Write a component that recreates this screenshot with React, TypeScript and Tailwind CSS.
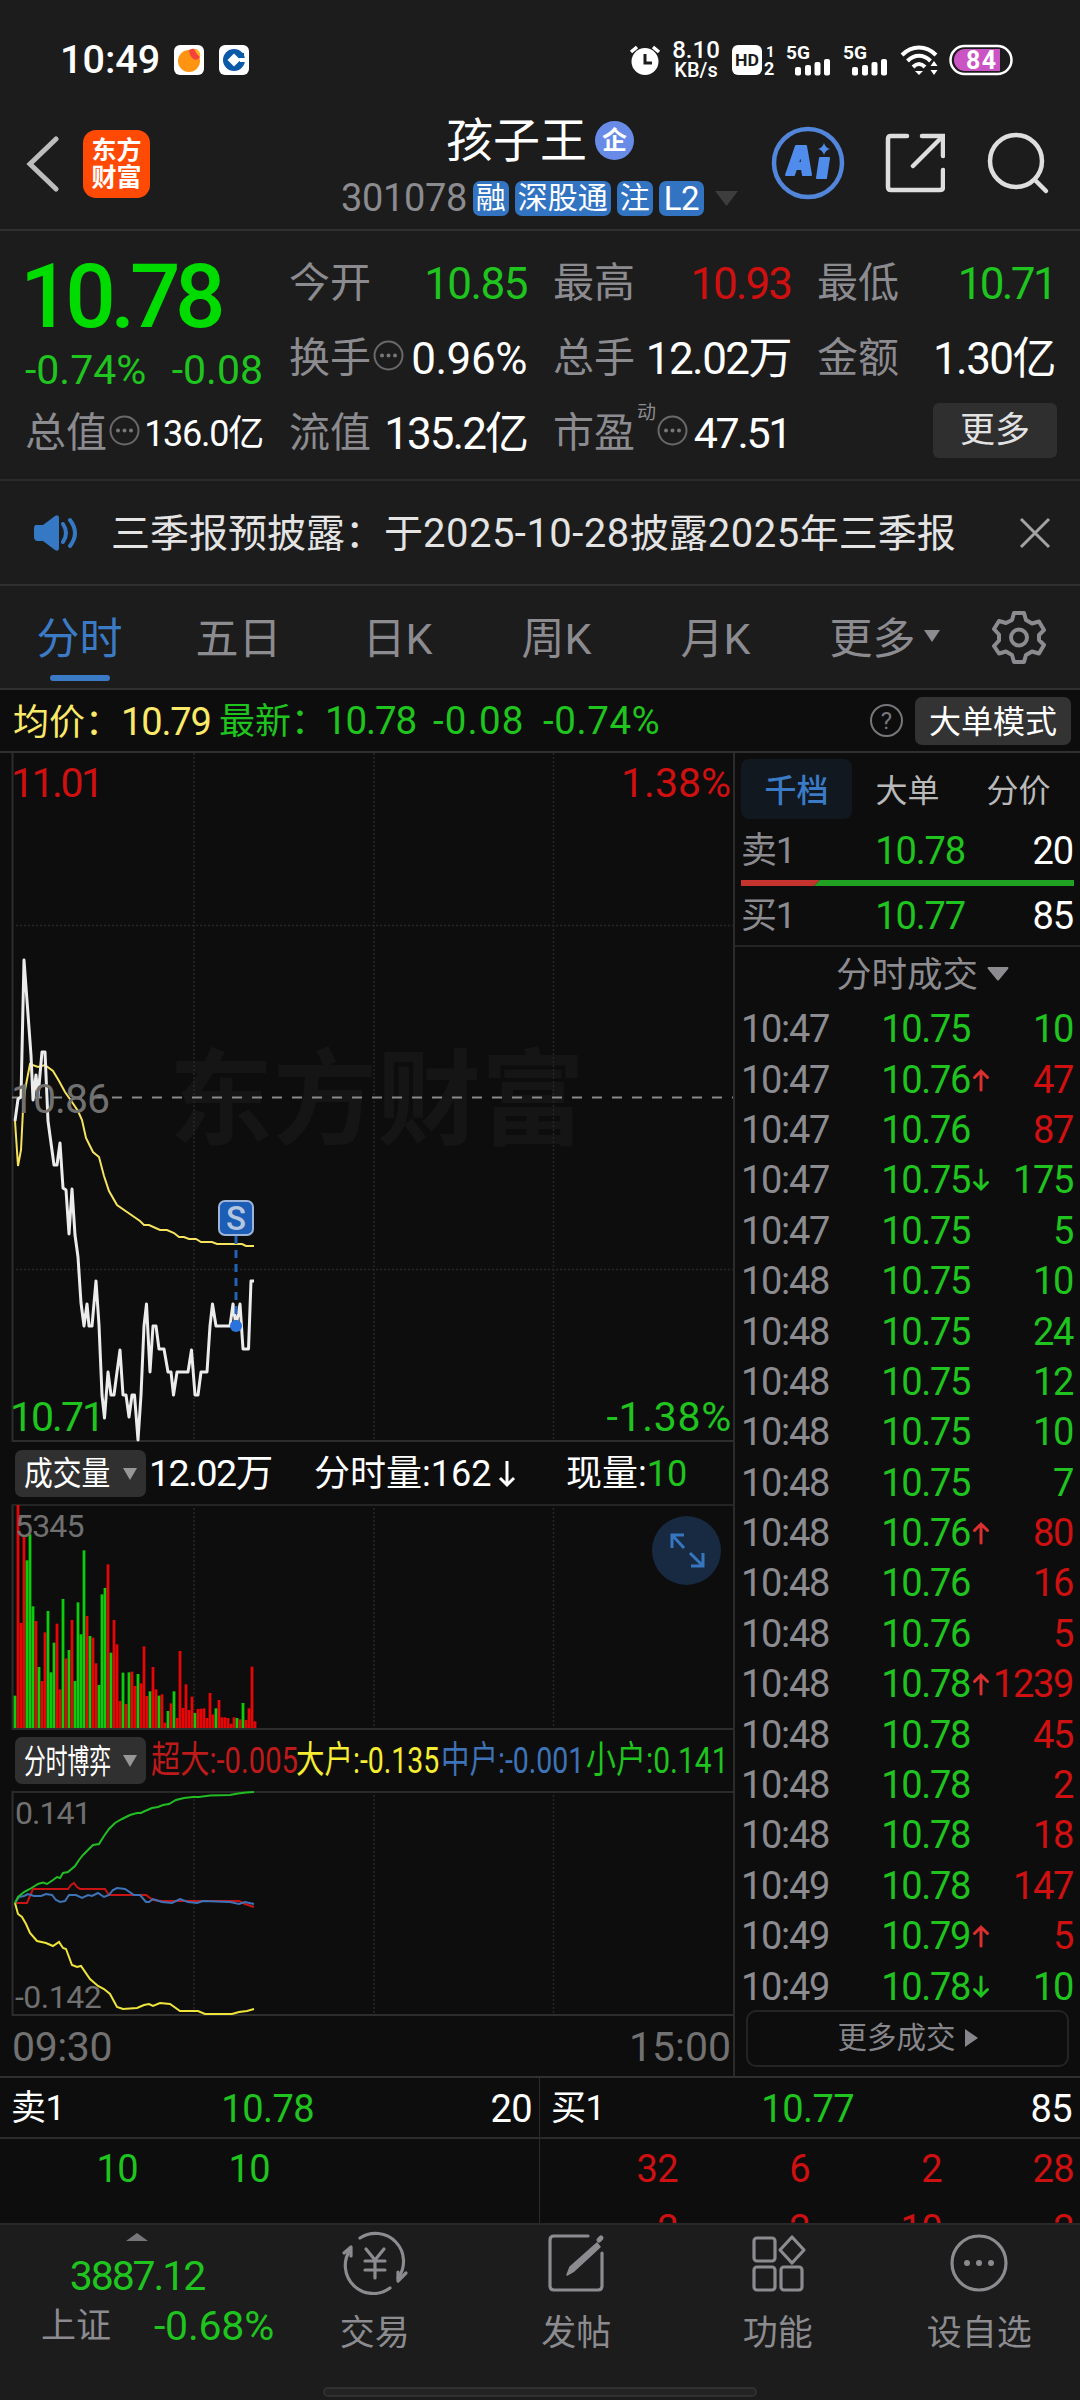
import type { ReactNode } from "react";
import clsx from "clsx";

const UP = "text-[#cf1010]";
const DOWN = "text-[#1fc41f]";
const GREY = "text-[#8b8b90]";

type Trade = [time: string, price: string, volume: number, side: "buy" | "sell", arrow?: "up" | "down"];

const trades: Trade[] = [
  ["10:47", "10.75", 10, "sell"],
  ["10:47", "10.76", 47, "buy", "up"],
  ["10:47", "10.76", 87, "buy"],
  ["10:47", "10.75", 175, "sell", "down"],
  ["10:47", "10.75", 5, "sell"],
  ["10:48", "10.75", 10, "sell"],
  ["10:48", "10.75", 24, "sell"],
  ["10:48", "10.75", 12, "sell"],
  ["10:48", "10.75", 10, "sell"],
  ["10:48", "10.75", 7, "sell"],
  ["10:48", "10.76", 80, "buy", "up"],
  ["10:48", "10.76", 16, "buy"],
  ["10:48", "10.76", 5, "buy"],
  ["10:48", "10.78", 1239, "buy", "up"],
  ["10:48", "10.78", 45, "buy"],
  ["10:48", "10.78", 2, "buy"],
  ["10:48", "10.78", 18, "buy"],
  ["10:49", "10.78", 147, "buy"],
  ["10:49", "10.79", 5, "buy", "up"],
  ["10:49", "10.78", 10, "sell", "down"],
];

// One bar per minute, negative when the price fell
const volumes = [
  -97, 669, 315, 574, -503, -581, -365, 321, -183, 141, 287, -351, -167, -256, 313, 116, -387, 209, -234, 324,
  -141, -377, -281, -533, 336, -276, 271, 194, -129, -401, -420, 491, -226, 324, 251, 81, -166, 72, -167, 169,
  126, -162, 134, 245, 96, -110, 183, 116, -97, 101, 16, -51, 74, -110, 30, 231, 60, 131, 54, 94,
  -45, 57, 58, 59, 30, 105, 41, -59, 84, 32, 32, 30, 13, 32, -30, 26, -75, 24, 59, 184, 20,
];

const priceLine =
  "15,1121 18,1099 21,1097 24,960 31,1055 33,1100 36,1075 38,1097 42,1052 45,1052 48,1121 51,1143 54,1165 57,1165 60,1143 63,1188 66,1190 69,1234 72,1189 75,1235 78,1257 81,1303 84,1326 87,1304 89,1326 92,1326 96,1281 99,1325 102,1395 104.5,1418 108,1372 111,1395 114,1395 117,1372 120,1350 123,1395 126,1395 129,1417 132,1395 134.5,1395 138,1440 141,1395 144,1326 146.5,1304 150,1372 153,1326 156,1326 159,1349 164,1349 168,1372 171,1372 173.5,1395 177,1372 188,1372 191.5,1350 195,1395 198,1395 201,1372 207,1372 210,1326 212.5,1304 216,1326 230,1326 233,1304 236,1326 240,1304 243,1349 248.5,1349 251,1281 254,1281";
const averageLine =
  "15,1121 18,1166 21,1150 23,1110 25,1090 30,1064 38,1067 45,1065 53,1071 59,1081 65,1092 72,1102 78,1111 82,1120 86,1138 93,1152 99,1157 104,1176 109,1191 117,1205 127,1212 140,1221 144,1225 149,1225 160,1230 167,1230 174,1233 179,1237 184,1237 189,1239 196,1239 201,1242 212,1242 217,1244 242,1244 246,1246 254,1246";
const smallLine =
  "15,1903 18,1897 24,1892 30,1889 38,1884 43,1882.5 47,1884 53,1880 57,1877 60,1878 63,1873 68,1872 75,1866 79,1860 83,1855 88,1850 93,1845 99,1844 104,1836 109,1829 115,1823 122,1819 130,1815 137,1813 141,1813 145,1811 152,1808 158,1807 163,1805 169,1804 176,1800 184,1798 193,1797 199,1797 210,1795.5 230,1795 238,1793.5 246,1792.5 254,1792";
const superLine =
  "15,1903 27,1903 33,1889 68,1889 71,1885 74,1883 77,1887 80,1889 105,1889 109,1895 146,1895 153,1900 160,1901 239,1901 245,1904 254,1907";
const middleLine =
  "15,1903 19,1897 24,1896 28,1894 34,1896 41,1896 46,1894 52,1895 56,1900 60,1902 65,1901 69,1895 76,1895 82,1898 88,1895 92,1896 98,1893 104,1897 109,1895 113,1890 117,1888 125,1889 134,1895 140,1895 146,1902 149,1902 153,1899 162,1902 172,1903 180,1899 188,1902 197,1903 203,1901 230,1902 239,1904 245,1902 254,1904";
const largeLine =
  "15,1903 18,1914 22,1917 26,1924 30,1933 37,1941 46,1943 53,1946 59,1942 63,1948 66,1949 72,1965 77,1967 81,1966 90,1979 98,1986 104,1989 110,1994 117,2007 123,2009 137,2008 144,2005 149,2004 153,2006 160,2003 170,2004 180,2011 198,2011 205,2014 232,2014 239,2012 247,2011 254,2009";

const SignalIcon = () => (
  <svg className="overflow-visible" width="46" height="32" viewBox="0 0 46 32" fill="#fff">
    <text x="0" y="15" fontSize="19" fontWeight="700" textLength="24" lengthAdjust="spacingAndGlyphs">
      5G
    </text>
    <rect x="9" y="23" width="6" height="8.500" rx="2" />
    <rect x="19" y="21" width="6" height="10.500" rx="2" />
    <rect x="28.500" y="18" width="6" height="13.500" rx="2" />
    <rect x="38" y="15" width="6" height="16.500" rx="2" />
  </svg>
);

const StatusBar = () => (
  <div className="flex h-[120px] items-center pl-[60px] pr-[67px] text-white">
    <span className="w-[114px] text-[39.500px] font-medium leading-none">10:49</span>
    <svg width="30" height="30" viewBox="0 0 30 30">
      <rect width="30" height="30" rx="6" fill="#fff" />
      <circle cx="15" cy="16" r="11" fill="#ff9412" />
      <path d="M15 5c6-3 11 0 11 7-3 5-10 3-11-7z" fill="#f4433c" />
      <path d="M20 4c4 0 7 3 6 8-3-2-4-5-6-8z" fill="#ffb31a" />
    </svg>
    <svg className="ml-[15px]" width="30" height="30" viewBox="0 0 30 30">
      <rect width="30" height="30" rx="6" fill="#fff" />
      <circle cx="15" cy="15" r="11" fill="#0a5aa8" />
      <path d="M15 8.500l6.500 6.500-6.500 6.500L8.500 15z" fill="#fff" />
      <path d="M20 13h8v4h-7z" fill="#fff" />
      <path d="M18 8h7v5h-5z" fill="#0a5aa8" />
    </svg>
    <div className="ml-auto flex items-center">
      <svg width="32" height="32" viewBox="0 0 32 32" fill="#fff">
        <circle cx="16" cy="17.500" r="13.500" />
        <path d="M16 10v9h7" fill="none" stroke="#1c1c1c" strokeWidth="3" />
        <path d="M2 8l6-5M30 8l-6-5" stroke="#fff" strokeWidth="3.500" />
      </svg>
      <div className="ml-[11px] flex w-[48px] flex-col items-center whitespace-nowrap font-medium leading-none">
        <span className="text-[24px] leading-[19px]">8.10</span>
        <span className="text-[20px] leading-[20px]">KB/s</span>
      </div>
      <svg className="ml-[12px] overflow-visible" width="44" height="32" viewBox="0 0 44 32" fill="#fff">
        <rect y="1" width="30" height="30" rx="6" />
        <text x="3" y="22" fontSize="17" fontWeight="700" fill="#1c1c1c" textLength="24" lengthAdjust="spacingAndGlyphs">
          HD
        </text>
        <text x="34" y="13" fontSize="15" fontWeight="700">
          1
        </text>
        <text x="32" y="31" fontSize="18" fontWeight="700">
          2
        </text>
      </svg>
      <span className="ml-[10px] flex gap-[11px]">
        <SignalIcon />
        <SignalIcon />
      </span>
      <svg className="ml-[11px]" width="40" height="32" viewBox="0 0 40 32" fill="none" stroke="#fff" strokeWidth="4">
        <path d="M2 11c10-10 24-10 34 0" />
        <path d="M7.500 17c7-7 16-7 23 0" />
        <path d="M13 23c4-4 8-4 12 0" />
        <path d="M15 27l4 4 4-4z" fill="#fff" stroke="none" />
        <path d="M34 17l3.500 5h-7zM34 31l3.500-5h-7z" fill="#fff" stroke="none" />
      </svg>
      <svg className="ml-[9px]" width="64" height="32" viewBox="0 0 64 32">
        <rect x="1.500" y="2" width="61" height="28" rx="14" fill="#1c1c1c" stroke="#fff" strokeWidth="2.500" />
        <path d="M16 5h35v22H16a11 11 0 0 1 0-22z" fill="#cb54c4" />
        <text x="17" y="24.500" fontSize="25" fontWeight="700" fill="#fff" textLength="30">
          84
        </text>
      </svg>
    </div>
  </div>
);

const Tag = ({ children }: { children: ReactNode }) => (
  <span className="flex h-[35px] shrink-0 items-center whitespace-nowrap rounded-[7px] bg-[#3274c1] px-[3px] text-[30px] leading-none text-white">
    {children}
  </span>
);

const Header = () => (
  <div className="flex h-[111px] items-start border-b-2 border-[#303030]">
    <svg className="ml-[26px] mt-[16px]" width="34" height="56" viewBox="0 0 34 56" fill="none">
      <path d="M30 3L4 28l26 25" stroke="#bdbdbd" strokeWidth="5" strokeLinecap="round" />
    </svg>
    <div className="ml-[23px] mt-[10px] flex h-[68px] w-[67px] flex-col items-center justify-center rounded-[13px] bg-[#ff4a05] text-[25px] font-bold leading-[27px] text-white">
      <span>东方</span>
      <span>财富</span>
    </div>
    <div className="ml-[191px] w-[394px]">
      <div className="-mt-[5px] flex h-[50px] items-center pl-[105px]">
        <span className="text-[47px] leading-none text-white">孩子王</span>
        <span className="ml-[8px] flex size-[39px] items-center justify-center rounded-full bg-[#678be6] text-[25px] font-bold leading-none text-white">
          企
        </span>
      </div>
      <div className="mt-[14px] flex items-center gap-[6px]">
        <span className={clsx("w-[128px] text-[38px] leading-none tracking-[-0.01em]", GREY)}>301078</span>
        <Tag>融</Tag>
        <Tag>深股通</Tag>
        <Tag>注</Tag>
        <Tag>
          <span className="px-[2px] text-[33px] tracking-[-0.02em]">L2</span>
        </Tag>
        <svg className="ml-[5px] shrink-0" width="23" height="15" viewBox="0 0 23 15" fill="#3d3d3d">
          <path d="M0 0h23L11.500 15z" />
        </svg>
      </div>
    </div>
    <svg className="ml-[36px] mt-[6px]" width="74" height="74" viewBox="0 0 74 74">
      <circle cx="37" cy="37" r="34" fill="none" stroke="#5186da" strokeWidth="4.500" />
      <path
        d="M15 49l10-29h10l5 29h-8l-1-6h-6l-2 6zM27 37h4l-1-9z M49 32h9l-3 20h-9z"
        fill="#508ceb"
        stroke="#508ceb"
        strokeWidth="2"
        strokeLinejoin="round"
        fillRule="evenodd"
      />
      <path d="M53 17q1.500 5 6 6-4.500 1-6 6-1.500-5-6-6 4.500-1 6-6z" fill="#508ceb" />
    </svg>
    <svg className="ml-[40px] mt-[13px]" width="60" height="60" viewBox="0 0 60 60" fill="none" stroke="#dedede" strokeWidth="4.500" strokeLinecap="round">
      <path d="M22 3H6q-3 0-3 3v48q0 3 3 3h49q3 0 3-3V37" />
      <path d="M37 3h21v20" />
      <path d="M57 4L28 33" />
    </svg>
    <svg className="ml-[42px] mt-[12px]" width="64" height="64" viewBox="0 0 64 64" fill="none" stroke="#dedede" strokeWidth="4.500" strokeLinecap="round">
      <circle cx="29" cy="29" r="26" />
      <path d="M48 48l11 11" />
    </svg>
  </div>
);

const Dots = () => (
  <svg className="mb-[6px] ml-[2px] shrink-0" width="31" height="31" viewBox="0 0 31 31" fill="#77777b">
    <circle cx="15.500" cy="15.500" r="14" fill="none" stroke="#69696c" strokeWidth="2" />
    <circle cx="9" cy="15.500" r="2" />
    <circle cx="15.500" cy="15.500" r="2" />
    <circle cx="22" cy="15.500" r="2" />
  </svg>
);

interface StatProps {
  label: string;
  value: string;
  color?: string;
  fit?: string;
  dots?: boolean;
  sup?: string;
}

const Stat = ({ label, value, color = "text-white", fit = "text-[44px] tracking-[-0.035em]", dots, sup }: StatProps) => (
  <div className="flex h-[75px] w-[238px] items-center whitespace-nowrap pt-[2px] leading-none">
    <span className={clsx("text-[41px]", GREY)}>{label}</span>
    {sup && <span className={clsx("-mr-px ml-[2px] self-start pt-[6px] text-[19px]", GREY)}>{sup}</span>}
    {dots && <Dots />}
    <span className={clsx("ml-auto", color, fit)}>{value}</span>
  </div>
);

const Quote = () => (
  <div className="flex h-[250px] justify-between border-b-2 border-[#2b2b2b] px-[25px] pt-[14px]">
    <div>
      <div className="-ml-[5px] flex h-[100px] items-center pt-[2px] text-[89px] font-medium leading-none tracking-[-0.06em] text-[#00dc00]">
        10.78
      </div>
      <div className={clsx("flex h-[50px] w-[238px] items-center justify-between whitespace-nowrap text-[41px] leading-none", DOWN)}>
        <span>-0.74%</span>
        <span>-0.08</span>
      </div>
      <Stat label="总值" value="136.0亿" fit="text-[36px] tracking-[-0.035em]" dots />
    </div>
    <div>
      <Stat label="今开" value="10.85" color={DOWN} />
      <Stat label="换手" value="0.96%" fit="text-[44px] tracking-[-0.01em]" dots />
      <Stat label="流值" value="135.2亿" fit="text-[44px] tracking-[-0.045em]" />
    </div>
    <div>
      <Stat label="最高" value="10.93" color={UP} fit="text-[44px] tracking-[-0.045em]" />
      <Stat label="总手" value="12.02万" />
      <Stat label="市盈" sup="动" value="47.51" fit="text-[43px] tracking-[-0.055em] pr-[1px]" dots />
    </div>
    <div className="flex flex-col items-end">
      <Stat label="最低" value="10.71" color={DOWN} fit="text-[44px] tracking-[-0.06em]" />
      <Stat label="金额" value="1.30亿" />
      <button type="button" className="-mr-[2px] mt-[8px] h-[55px] w-[124px] rounded-[6px] bg-[#2f2f2f] text-[35px] leading-none text-[#e2e2e2]">
        更多
      </button>
    </div>
  </div>
);

const Notice = () => (
  <div className="flex h-[105px] items-center border-b-2 border-[#303030] pl-[32px] pr-[29px]">
    <svg width="48" height="38" viewBox="0 0 48 38" fill="#3578c4">
      <path d="M4 11h7L23 2q4-2 4 2v30q0 4-4 2l-12-9H5q-3-1-3-4v-8q0-4 2-4z" />
      <path d="M31 10q6 9 0 18M38 6q10 13 0 26" fill="none" stroke="#3578c4" strokeWidth="4" strokeLinecap="round" />
    </svg>
    <span className="ml-[31px] whitespace-nowrap pt-[2px] text-[39px] leading-none text-[#e4e4e4]">
      三季报预披露：于<span className="text-[40px] tracking-[0.012em]">2025-10-28</span>披露
      <span className="text-[40px] tracking-[0.012em]">2025</span>年三季报
    </span>
    <svg className="ml-auto" width="32" height="32" viewBox="0 0 32 32" stroke="#a3a3a3" strokeWidth="3">
      <path d="M2 2l28 28M30 2L2 30" />
    </svg>
  </div>
);

const tabs = ["分时", "五日", "日K", "周K", "月K", "更多"];

const PeriodTabs = () => (
  <div className="flex h-[104px] items-center border-b-2 border-[#303030]">
    {tabs.map((tab, i) => (
      <div
        key={tab}
        className={clsx(
          "relative flex h-full w-[159px] items-center justify-center pt-[4px] text-[43px] leading-none",
          i === 0 ? "text-[#3b7bc6]" : GREY,
          i === 5 && "pl-[20px]"
        )}
      >
        {tab}
        {i === 0 && <span className="absolute bottom-[7px] h-[6px] w-[60px] rounded-full bg-[#3b7bc6]" />}
        {i === 5 && (
          <svg className="mb-[6px] ml-[8px]" width="16" height="12" viewBox="0 0 16 12" fill="#8b8b90">
            <path d="M0 0h16L8 12z" />
          </svg>
        )}
      </div>
    ))}
    <svg className="ml-[38px]" width="54" height="54" viewBox="0 0 54 54" fill="none" stroke="#8b8b90" strokeWidth="4" strokeLinejoin="round">
      <path d="M22 3h10l2 7 6 3.500 7-2 5 8.500-5 5v5l5 5-5 8.500-7-2-6 3.500-2 7H22l-2-7-6-3.500-7 2L2 36l5-5.500v-6L2 19l5-8 7 2 6-3z" />
      <circle cx="27" cy="27.500" r="8" />
    </svg>
  </div>
);

const AverageRow = () => (
  <div className="flex h-[63px] items-center whitespace-nowrap border-b-2 border-[#303030] bg-[#0d0d0d] pl-[13px] pr-[9px] leading-none">
    <span className="w-[206px] pt-[2px] text-[36px] text-[#fbe96a]">
      均价：<span className="text-[38px] tracking-[-0.03em]">10.79</span>
    </span>
    <span className={clsx("pt-[2px] text-[36px]", DOWN)}>最新：</span>
    <span className={clsx("-ml-[2px] flex pt-[2px] text-[38.500px]", DOWN)}>
      <span className="w-[108px] tracking-[-0.03em]">10.78</span>
      <span className="w-[110px] tracking-[0.03em]">-0.08</span>
      <span className="tracking-[0.015em]">-0.74%</span>
    </span>
    <span className="ml-auto flex size-[33px] items-center justify-center rounded-full border-2 border-[#77777b] text-[24px] text-[#77777b]">
      ?
    </span>
    <span className="ml-[12px] flex h-[48px] w-[156px] items-center justify-center rounded-[7px] bg-[#333333] pt-[2px] text-[32px] text-white">
      大单模式
    </span>
  </div>
);

const GridLines = ({ top, bottom }: { top: number; bottom: number }) => (
  <>
    {[194, 374, 553.5].map((x) => (
      <path key={x} d={`M${x} ${top}V${bottom}`} stroke="#272727" strokeWidth="1.5" strokeDasharray="2 2" />
    ))}
    <path d={`M12.500 ${top}V${bottom - 1}H733`} fill="none" stroke="#2d2d2d" strokeWidth="2" />
  </>
);

const PriceChart = () => (
  <svg className="block" width="733" height="689" viewBox="0 753 733 689">
    <text x="169" y="1137" fontSize="104" fontWeight="700" fill="#151515">
      东方财富
    </text>
    <GridLines top={753} bottom={1442} />
    <path d="M12 925.500H733M12 1269.500H733" stroke="#272727" strokeWidth="1.5" strokeDasharray="2 2" />
    <path d="M12 1097.500H733" stroke="#8a8a8a" strokeWidth="2" strokeDasharray="10 10" />
    <polyline points={averageLine} fill="none" stroke="#f5e35f" strokeWidth="2" />
    <polyline points={priceLine} fill="none" stroke="#ececec" strokeWidth="3" strokeLinejoin="round" />
    <path d="M236 1236V1326" stroke="#2462b4" strokeWidth="3" strokeDasharray="8 6" />
    <circle cx="236" cy="1326" r="6" fill="#2a73dc" />
    <rect x="219" y="1201" width="34" height="34" rx="6" fill="#1c5db5" stroke="#9db4d8" strokeWidth="2" />
    <text x="236" y="1230" fontSize="33" fontWeight="500" fill="#b6c6df" textAnchor="middle">
      S
    </text>
    <g fontSize="41" letterSpacing="-1">
      <text x="11" y="797" fill="#cf1010" letterSpacing="-2.5">11.01</text>
      <text x="731" y="797" fill="#cf1010" textAnchor="end" letterSpacing="0">1.38%</text>
      <text x="11" y="1113" fill="#717171">10.86</text>
      <text x="10" y="1431" fill="#1fc41f" letterSpacing="-2">10.71</text>
      <text x="732" y="1431" fill="#1fc41f" textAnchor="end" letterSpacing="0.7">-1.38%</text>
    </g>
  </svg>
);

const VolumeChart = () => (
  <svg className="block" width="733" height="226" viewBox="0 1504 733 226">
    <GridLines top={1504} bottom={1730} />
    <path d="M12 1505H733" stroke="#242424" strokeWidth="2" />
    {volumes.map((v, i) => (
      <rect
        key={i}
        x={13.6 + i * 3}
        y={1728 - Math.abs(v) / 3}
        width="2.800"
        height={Math.abs(v) / 3}
        fill={v > 0 ? "#e80505" : "#0ccc0c"}
      />
    ))}
    <text x="15" y="1537" fontSize="32" fill="#707070" letterSpacing="-0.8">
      5345
    </text>
    <circle cx="686.500" cy="1550.500" r="34.500" fill="#182a41" />
    <path d="M684 1535h-12v13M673 1536l11 12M691 1566h12v-13M702 1565l-12-12" fill="none" stroke="#3676bf" strokeWidth="3" />
  </svg>
);

const FlowChart = () => (
  <svg className="block" width="733" height="225" viewBox="0 1791 733 225">
    <GridLines top={1791} bottom={2016} />
    <path d="M12 1792H733" stroke="#2a2a2a" strokeWidth="2" />
    <g fontSize="32" fill="#707070" letterSpacing="-1">
      <text x="15" y="1824">0.141</text>
      <text x="15" y="2008" letterSpacing="-0.5">-0.142</text>
    </g>
    <g fill="none" strokeWidth="2">
      <polyline points={superLine} stroke="#c81414" />
      <polyline points={middleLine} stroke="#3f73b8" />
      <polyline points={largeLine} stroke="#efe43c" />
      <polyline points={smallLine} stroke="#22bd22" />
    </g>
  </svg>
);

// Labels are squeezed sideways so that they fit the fixed-width selector
const IndicatorSelect = ({ label, squeeze }: { label: string; squeeze: string }) => (
  <div className="relative flex h-[47px] w-[131px] items-center rounded-[7px] bg-[#303030] pl-[9px] pt-[2px] text-[33.500px] text-white">
    <span className={clsx("origin-left", squeeze)}>{label}</span>
    <svg className="absolute right-[9px] top-[18px]" width="14" height="12" viewBox="0 0 14 12" fill="#97979a">
      <path d="M0 0h14L7 12z" />
    </svg>
  </div>
);

const flows = [
  { text: "超大:-0.005", box: "w-[145px] text-[#bd1a1a]", squeeze: "scale-x-[0.79]" },
  { text: "大户:-0.135", box: "w-[145px] text-[#f5ec33]", squeeze: "scale-x-[0.77]" },
  { text: "中户:-0.001", box: "w-[145px] text-[#3f73b8]", squeeze: "scale-x-[0.77]" },
  { text: "小户:0.141", box: "w-[140px] text-[#1fc41f]", squeeze: "scale-x-[0.81]" },
];

const Charts = () => (
  <div className="w-[735px] whitespace-nowrap border-r-2 border-[#2b2b2b] leading-none">
    <PriceChart />
    <div className="flex h-[62px] items-center pl-[15px] text-[36px] text-white">
      <IndicatorSelect label="成交量" squeeze="scale-x-[0.86]" />
      <span className="ml-[3px] w-[165px] pt-[2px] text-[37.500px] tracking-[-0.04em]">12.02万</span>
      <span className="flex w-[252px] items-center pt-[2px]">
        分时量:162
        <svg className="ml-[7px]" width="18" height="28" viewBox="0 0 18 28" fill="none" stroke="#fff" strokeWidth="3">
          <path d="M9 1v24M2 18l7 7 7-7" />
        </svg>
      </span>
      <span className="pt-[2px]">现量:</span>
      <span className={clsx("pt-[2px]", DOWN)}>10</span>
    </div>
    <VolumeChart />
    <div className="flex h-[61px] items-center pl-[15px]">
      <IndicatorSelect label="分时博弈" squeeze="scale-x-[0.65]" />
      <div className="ml-[5px] flex text-[37px]">
        {flows.map((flow) => (
          <span key={flow.text} className={flow.box}>
            <span className={clsx("inline-block origin-left", flow.squeeze)}>{flow.text}</span>
          </span>
        ))}
      </div>
    </div>
    <FlowChart />
    <div className="flex h-[60px] items-center justify-between pl-[12px] pr-[2px] pt-[2px] text-[41px] text-[#717171]">
      <span className="tracking-[-0.01em]">09:30</span>
      <span>15:00</span>
    </div>
  </div>
);

const Arrow = ({ dir }: { dir: "up" | "down" }) => (
  <svg className="ml-[2px]" width="18" height="24" viewBox="0 0 18 24" fill="none" stroke={dir === "up" ? "#dc2f2f" : "#1fc41f"} strokeWidth="3" strokeLinecap="round">
    <path d={dir === "up" ? "M9 22V3M2.500 9.500L9 3l6.500 6.500" : "M9 2v19M2.500 14.500L9 21l6.500-6.500"} />
  </svg>
);

const Level = ({ side, price, volume }: { side: string; price: string; volume: number }) => (
  <div className="flex h-[59px] items-center pl-[6px] pr-[7px] text-[38px] tracking-[-0.03em]">
    <span className={clsx("w-[108px] text-[36px]", GREY)}>{side}</span>
    <span className={clsx("w-[116px] text-right", DOWN)}>{price}</span>
    <span className="ml-auto text-white">{volume}</span>
  </div>
);

const TradePanel = () => (
  <div className="flex-1 leading-none">
    <div className="flex pl-[6px] pt-[6px] text-[32px] text-[#b9b9b9]">
      <span className="flex h-[60px] w-[111px] items-center justify-center rounded-[8px] bg-[#111820] pt-[3px] font-medium text-[#3b7bc6]">千档</span>
      <span className="flex h-[60px] w-[111px] items-center justify-center pt-[3px]">大单</span>
      <span className="flex h-[60px] w-[111px] items-center justify-center pt-[3px]">分价</span>
    </div>
    <div className="pt-[2px]">
      <Level side="卖1" price="10.78" volume={20} />
    </div>
    <svg className="ml-[6px] block" width="333" height="6" viewBox="0 0 333 6">
      <path d="M0 0h79l-6 6H0z" fill="#c5332f" />
      <path d="M79 0h254v6H73z" fill="#21a121" />
    </svg>
    <Level side="买1" price="10.77" volume={85} />
    <div className={clsx("flex h-[59px] items-center border-t-2 border-[#242424] pl-[101px] text-[35.500px]", GREY)}>
      分时成交
      <svg className="mb-[3px] ml-[9px]" width="22" height="14" viewBox="0 0 22 14" fill="#8b8b90">
        <path d="M1 0h20q1 1 0 2L12 13q-1 1-2 0L1 2q-1-1 0-2z" />
      </svg>
    </div>
    {trades.map(([time, price, volume, side, arrow], i) => (
      <div key={i} className="flex h-[50.400px] items-center pl-[6px] pr-[7px] text-[38px] tracking-[-0.035em]">
        <span className={clsx("w-[110px]", GREY)}>{time}</span>
        <span className={clsx("w-[119px] text-right", DOWN)}>{price}</span>
        {arrow && <Arrow dir={arrow} />}
        <span className={clsx("ml-auto", side === "buy" ? UP : DOWN)}>{volume}</span>
      </div>
    ))}
    <div className="-mt-[2px] ml-[11px] flex h-[57px] w-[323px] items-center justify-center rounded-[10px] border-2 border-[#242424] text-[29.500px] text-[#85858a]">
      更多成交
      <svg className="ml-[9px]" width="13" height="18" viewBox="0 0 13 18" fill="#85858a">
        <path d="M0 0l13 9-13 9z" />
      </svg>
    </div>
  </div>
);

interface BookSideProps {
  side: string;
  price: string;
  volume: number;
  color: string;
  orders: string[];
}

const BookSide = ({ side, price, volume, color, orders }: BookSideProps) => (
  <div className="w-[540px] leading-none tracking-[-0.035em]">
    <div className="flex h-[61px] items-center border-b-2 border-[#2b2b2b] pl-[11px] pr-[8px] pt-[2px] text-[38px] text-white">
      <span className="w-[150px] text-[35px]">{side}</span>
      <span className={clsx("w-[153px] text-right", DOWN)}>{price}</span>
      <span className="ml-auto">{volume}</span>
    </div>
    <div className={clsx("grid h-[180px] auto-rows-[60px] grid-cols-4 pl-[6px] pr-[6px] text-right text-[38px]", color)}>
      {orders.map((order, i) => (
        <span key={i} className="leading-[60px]">
          {order}
        </span>
      ))}
    </div>
  </div>
);

const OrderBook = () => (
  <div className="flex h-[147px] overflow-hidden border-t-2 border-[#303030]">
    <BookSide side="卖1" price="10.78" volume={20} color={DOWN} orders={["10", "10"]} />
    <div className="-ml-px w-px shrink-0 bg-[#2b2b2b]" />
    <BookSide side="买1" price="10.77" volume={85} color={UP} orders={["32", "6", "2", "28", "2", "2", "10", "2"]} />
  </div>
);

const NavItem = ({ label, children }: { label: string; children: ReactNode }) => (
  <div className="flex flex-1 flex-col items-center">
    <svg className="mt-[6px]" width="68" height="64" viewBox="0 0 68 64" fill="none" stroke="#8b8b90" strokeWidth="3.200" strokeLinecap="round" strokeLinejoin="round">
      {children}
    </svg>
    <span className="mt-[21px]">{label}</span>
  </div>
);

const BottomNav = () => (
  <div className={clsx("relative flex h-[176px] border-t-2 border-[#282828] bg-[#1c1c1c] text-[35px] leading-none", GREY)}>
    <div className="flex w-[274px] flex-col items-center whitespace-nowrap">
      <svg className="mt-[8px]" width="22" height="8" viewBox="0 0 22 8" fill="#77777b">
        <path d="M11 0l11 8H0z" />
      </svg>
      <span className={clsx("mt-[15px] text-[41px] tracking-[-0.05em]", DOWN)}>3887.12</span>
      <span className="mt-[9px] flex w-full items-center pl-[41px]">
        上证
        <span className={clsx("ml-auto text-[41px] tracking-[-0.005em]", DOWN)}>-0.68%</span>
      </span>
    </div>
    <NavItem label="交易">
      <path d="M19 7a28 28 0 0 1 38 40M49 57A28 28 0 0 1 9 19" />
      <path d="M3 22l7-6v9M65 42l-8 8v-9" />
      <path d="M25 18l9 11 9-11M24 30h20M24 39h20M34 30v17" />
    </NavItem>
    <NavItem label="发帖">
      <path d="M46 5H12q-4 0-4 4v46q0 4 4 4h44q4 0 4-4V22" />
      <path d="M55 12L28 36l-3 8 7-4 26-24z" fill="#8b8b90" strokeWidth="1.500" />
      <path d="M57 9l2-2" strokeWidth="5" />
    </NavItem>
    <NavItem label="功能">
      <rect x="10" y="7" width="21" height="23" rx="3" />
      <rect x="10" y="36" width="21" height="23" rx="3" />
      <rect x="37" y="36" width="21" height="23" rx="3" />
      <path d="M48 6l12 13-12 13-12-13z" />
    </NavItem>
    <NavItem label="设自选">
      <circle cx="34" cy="32" r="27" />
      <g fill="#8b8b90" stroke="none">
        <circle cx="22" cy="32" r="3" />
        <circle cx="34" cy="32" r="3" />
        <circle cx="46" cy="32" r="3" />
      </g>
    </NavItem>
    <span className="absolute bottom-[2px] left-[323px] h-[10px] w-[434px] rounded-full border-2 border-[#303030] bg-[#232323]" />
  </div>
);

export default function App() {
  return (
    <div className="flex h-[2400px] w-[1080px] flex-col overflow-hidden bg-[#1c1c1c] font-['Roboto','Noto_Sans_CJK_SC',sans-serif]">
      <StatusBar />
      <Header />
      <Quote />
      <Notice />
      <PeriodTabs />
      <AverageRow />
      <div className="flex h-[1323px] bg-[#0d0d0d]">
        <Charts />
        <TradePanel />
      </div>
      <div className="bg-[#0d0d0d]">
        <OrderBook />
      </div>
      <BottomNav />
    </div>
  );
}
